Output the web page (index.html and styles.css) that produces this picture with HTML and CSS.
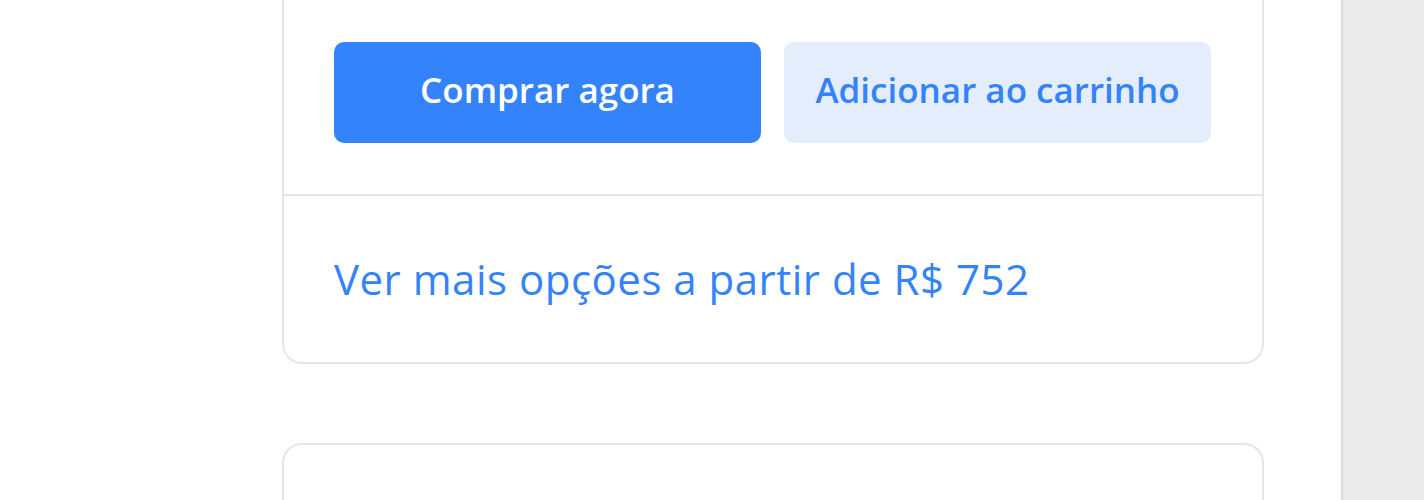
FILE: index.html
```html
<!DOCTYPE html>
<html lang="pt-BR">
<head>
    <meta charset="UTF-8">
    <meta name="viewport" content="width=device-width, initial-scale=1.0">
    <title>Comprar</title>
    <link rel="stylesheet" href="styles.css">
</head>
<body>
    <div class="page">
        <main class="column">
            <section class="buy-box">
                <div class="actions">
                    <button class="btn btn-primary">Comprar agora</button>
                    <button class="btn btn-secondary">Adicionar ao carrinho</button>
                </div>
                <div class="more-options">
                    <a href="#" class="more-link">Ver mais opções a partir de R$ 752</a>
                </div>
            </section>

            <section class="card"></section>
        </main>
        <aside class="side"></aside>
    </div>
</body>
</html>
```

FILE: styles.css
```css
body {
    margin: 0;
    background: #fff;
    font-family: "Open Sans", "Noto Sans", sans-serif;
    overflow: hidden;
}

.page {
    display: flex;
    height: 500px;
}

.column {
    width: 982px;
    margin-left: 282px;
    display: flex;
    flex-direction: column;
    gap: 79px;
}

.buy-box {
    border: 2px solid #e6e6e6;
    border-top: none;
    border-radius: 0 0 20px 20px;
}

.actions {
    display: grid;
    grid-template-columns: 427px 427px;
    gap: 23px;
    padding: 42px 50px 51px;
    border-bottom: 2px solid #e6e6e6;
}

.btn {
    height: 101px;
    padding: 0 0 6px;
    border: none;
    border-radius: 10px;
    font-family: inherit;
    font-size: 35px;
    font-weight: 600;
    cursor: pointer;
}

.btn-primary {
    background: #3483fa;
    color: #fff;
}

.btn-secondary {
    background: #e3edfb;
    color: #3483fa;
}

.more-options {
    padding: 58px 50px;
}

.more-link {
    display: block;
    line-height: 50px;
    font-size: 42px;
    letter-spacing: 0.5px;
    color: #3483fa;
    text-decoration: none;
}

/* next card, only its top edge is in view */
.card {
    flex: 1;
    border: 2px solid #e6e6e6;
    border-bottom: none;
    border-radius: 20px 20px 0 0;
}

.side {
    margin-left: auto;
    width: 81px;
    background: #ebebeb;
    border-left: 2px solid #dcdcdc;
}
```
